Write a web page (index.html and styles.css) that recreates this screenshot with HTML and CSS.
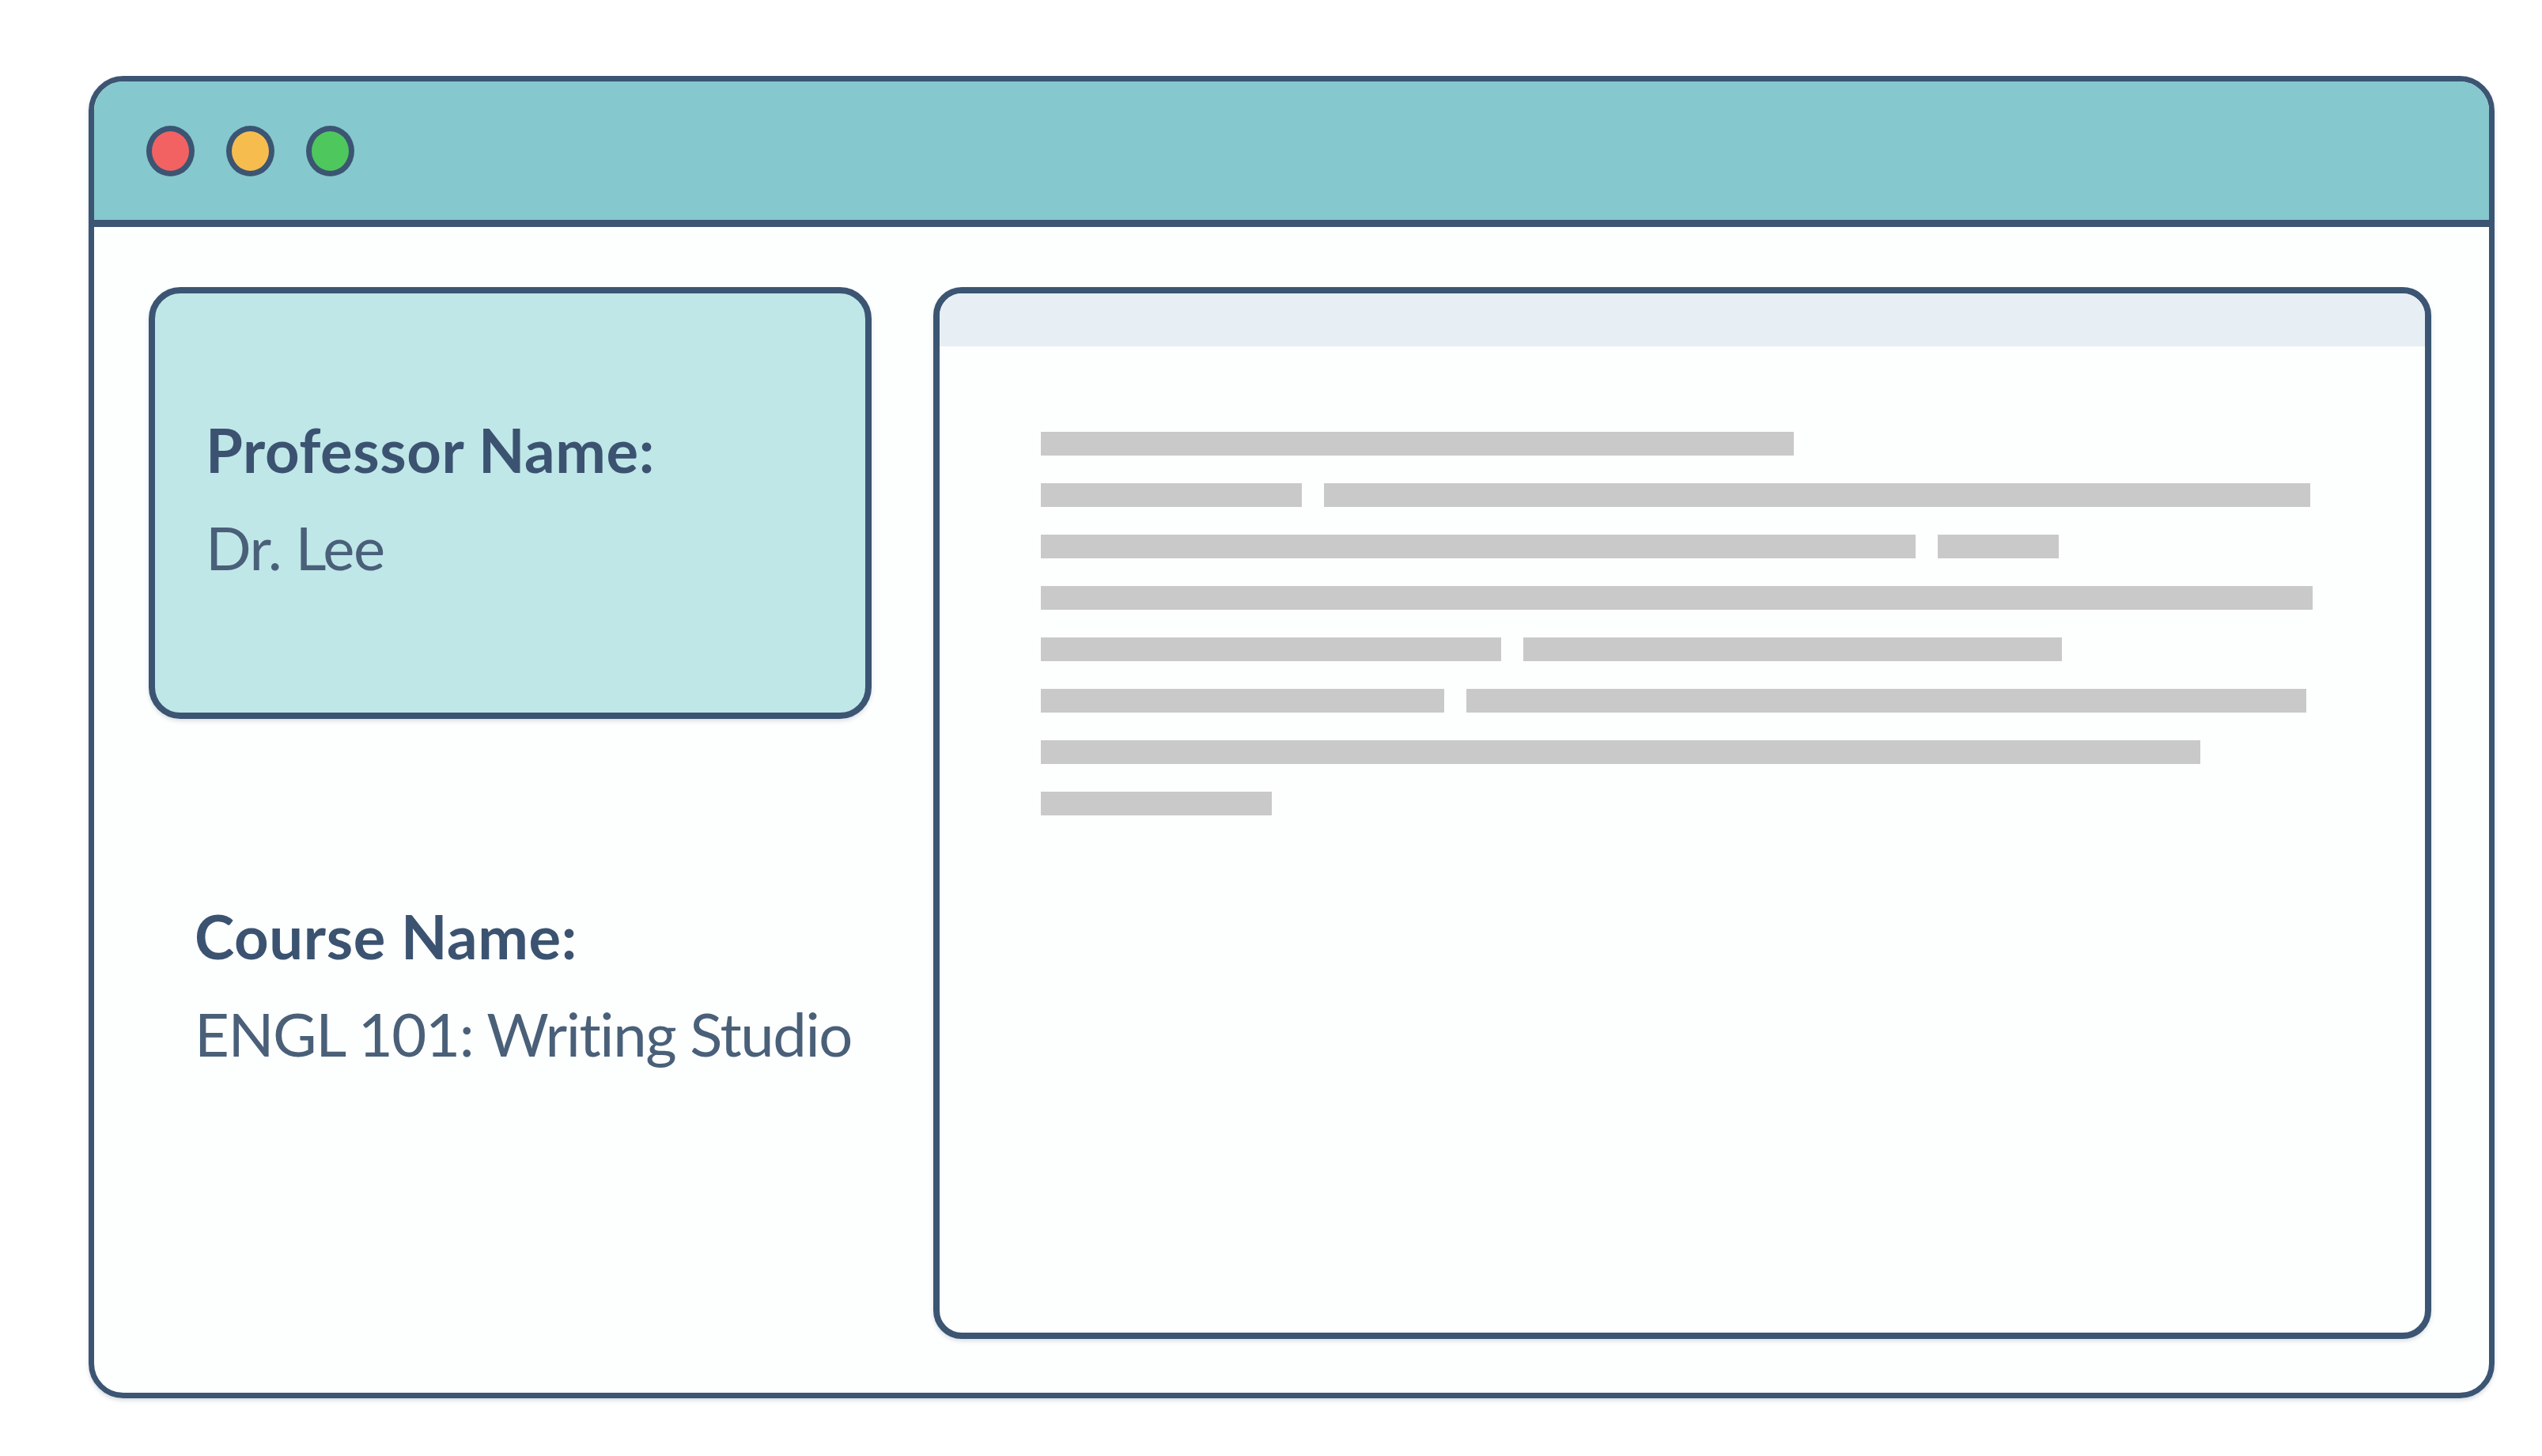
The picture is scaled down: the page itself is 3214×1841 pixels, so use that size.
FILE: index.html
```html
<!DOCTYPE html>
<html lang="en">
<head>
<meta charset="utf-8">
<title>Course Window</title>
<link rel="stylesheet" href="styles.css">
</head>
<body>
  <div class="window">
    <div class="titlebar">
      <span class="dot dot-red"></span>
      <span class="dot dot-yellow"></span>
      <span class="dot dot-green"></span>
    </div>
    <div class="content">
      <div class="left-col">
        <div class="prof-card">
          <div class="label">Professor Name:</div>
          <div class="value">Dr. Lee</div>
        </div>
        <div class="course">
          <div class="label">Course Name:</div>
          <div class="value">ENGL 101: Writing Studio</div>
        </div>
      </div>
      <div class="doc-panel">
        <div class="doc-header"></div>
        <div class="doc-lines">
          <div class="line-row"><span class="bar" style="width:952px"></span></div>
          <div class="line-row"><span class="bar" style="width:330px"></span><span class="bar" style="width:1247px"></span></div>
          <div class="line-row"><span class="bar" style="width:1106px"></span><span class="bar" style="width:153px"></span></div>
          <div class="line-row"><span class="bar" style="width:1608px"></span></div>
          <div class="line-row"><span class="bar" style="width:582px"></span><span class="bar" style="width:681px"></span></div>
          <div class="line-row"><span class="bar" style="width:510px"></span><span class="bar" style="width:1062px"></span></div>
          <div class="line-row"><span class="bar" style="width:1466px"></span></div>
          <div class="line-row"><span class="bar" style="width:292px"></span></div>
        </div>
      </div>
    </div>
  </div>
</body>
</html>
```
FILE: styles.css
```css
* { box-sizing: border-box; }
html, body {
  margin: 0;
  padding: 0;
  background: #ffffff;
}
body {
  width: 3214px;
  height: 1841px;
  padding: 96px 0 0 112px;
  font-family: Lato, "Open Sans", "Liberation Sans", sans-serif;
  font-variant-ligatures: none;
}
.window {
  width: 3042px;
  height: 1672px;
  border: 7px solid #3b5573;
  border-radius: 44px;
  background: #fdfefe;
  display: flex;
  flex-direction: column;
  overflow: hidden;
  box-shadow: 0 3px 5px rgba(40, 60, 90, 0.18);
}
.titlebar {
  height: 184px;
  flex: none;
  background: #85c8cd;
  border-bottom: 9px solid #3b5573;
  display: flex;
  align-items: center;
  gap: 40px;
  padding-left: 66px;
}
.dot {
  width: 61px;
  height: 64px;
  border-radius: 50%;
  border: 7px solid #3b5573;
  display: block;
}
.dot-red { background: #f26262; }
.dot-yellow { background: #f6bd4e; }
.dot-green { background: #4ec85d; }
.content {
  flex: 1;
  display: flex;
  gap: 78px;
  padding: 76px 73px 68px 69px;
}
.left-col {
  width: 914px;
  flex: none;
  display: flex;
  flex-direction: column;
}
.prof-card {
  height: 546px;
  background: #bfe7e8;
  border: 8px solid #3b5573;
  border-radius: 40px;
  padding: 136px 0 0 64px;
  box-shadow: 0 3px 5px rgba(40, 60, 90, 0.15);
}
.label {
  font-size: 76px;
  line-height: 123px;
  font-weight: 700;
  color: #3b5370;
  letter-spacing: 0.6px;
  white-space: nowrap;
}
.value {
  font-size: 76px;
  line-height: 123px;
  font-weight: 400;
  color: #4a6079;
  letter-spacing: -1.4px;
  white-space: nowrap;
}
.course {
  margin-top: 213px;
  padding-left: 58px;
}
.doc-panel {
  flex: 1;
  border: 8px solid #3b5573;
  border-radius: 36px;
  background: #fdfefe;
  overflow: hidden;
  display: flex;
  flex-direction: column;
  box-shadow: 0 3px 5px rgba(40, 60, 90, 0.15);
}
.doc-header {
  height: 67px;
  flex: none;
  background: #e7eff5;
}
.doc-lines {
  padding: 108px 0 0 128px;
  display: flex;
  flex-direction: column;
  gap: 35px;
}
.line-row {
  display: flex;
  gap: 28px;
  height: 30px;
}
.bar {
  display: block;
  height: 30px;
  background: #c9c9c9;
}
```
